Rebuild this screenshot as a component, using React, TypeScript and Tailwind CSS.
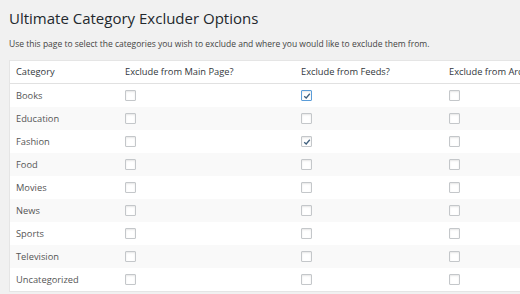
const categories = ['Books', 'Education', 'Fashion', 'Food', 'Movies', 'News', 'Sports', 'Television', 'Uncategorized'];

// which boxes are ticked: [main, feeds, archives]
const checked: Record<string, boolean[]> = {
  Books: [false, true, false],
  Fashion: [false, true, false],
};

function Box({ on, focus }: { on?: boolean; focus?: boolean }) {
  return (
    <span
      className={`flex h-[11px] w-[11px] items-center justify-center rounded-[1px] border bg-white shadow-[inset_0_1px_2px_rgba(0,0,0,0.1)] ${
        focus ? 'border-[#5b9dd9] shadow-[0_0_2px_rgba(30,140,190,0.8)]' : 'border-[#c4c7ca]'
      }`}
    >
      {on && (
        <svg viewBox="0 0 10 10" className="h-[8px] w-[8px]">
          <path d="M1.5 5.2 L4 7.5 L8.5 2.2" fill="none" stroke="#40607e" strokeWidth="1.6" />
        </svg>
      )}
    </span>
  );
}

export default function App() {
  return (
    <div className="h-[294px] w-[520px] overflow-hidden bg-[#f1f1f1] pl-[9px] font-['Open_Sans',sans-serif] text-[#444]">
      <h1 className="pt-[6px] text-[15px] leading-[24px] text-[#23282d]">Ultimate Category Excluder Options</h1>
      <p className="mt-[8px] text-[8.5px] leading-[12px] text-[#444]">
        Use this page to select the categories you wish to exclude and where you would like to exclude them from.
      </p>

      <div className="mt-[10px] w-[620px] border border-[#e5e5e5] bg-white text-[9.3px] text-[#555]">
        {/* Header */}
        <div className="grid h-[23px] grid-cols-[108px_176px_148px_1fr] items-center border-b border-[#e1e1e1] text-[#32373c]">
          <div className="pl-[6px]">Category</div>
          <div className="pl-[7px]">Exclude from Main Page?</div>
          <div className="pl-[7px]">Exclude from Feeds?</div>
          <div className="whitespace-nowrap pl-[7px]">Exclude from Archives?</div>
        </div>

        {categories.map((c, i) => {
          const v = checked[c] ?? [false, false, false];
          return (
            <div
              key={c}
              className={`grid h-[23px] grid-cols-[108px_176px_148px_1fr] items-center ${i % 2 ? 'bg-[#f9f9f9]' : 'bg-white'}`}
            >
              <div className="pl-[6px]">{c}</div>
              <div className="pl-[7px]"><Box on={v[0]} /></div>
              <div className="pl-[7px]"><Box on={v[1]} focus={c === 'Books'} /></div>
              <div className="pl-[7px]"><Box on={v[2]} /></div>
            </div>
          );
        })}
      </div>
    </div>
  );
}
